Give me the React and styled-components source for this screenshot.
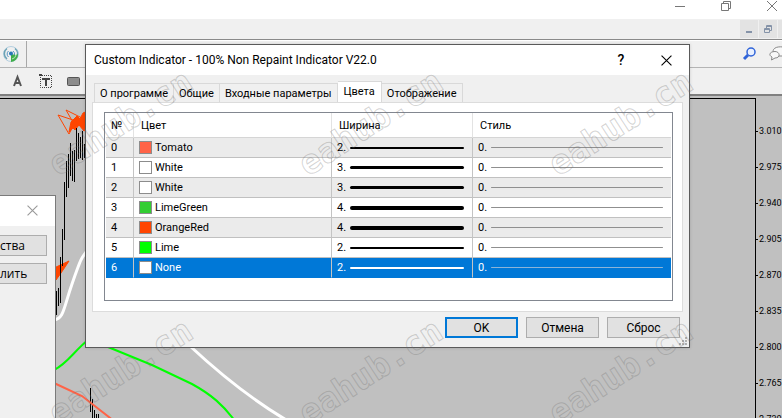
import React from "react";
import styled, { createGlobalStyle } from "styled-components";

const uiFont = `"Roboto", "Liberation Sans", sans-serif`;
const listFont = `"Open Sans", "Noto Sans", sans-serif`;

const GlobalStyle = createGlobalStyle`
    * {
        box-sizing: border-box;
    }

    body {
        margin: 0;
        overflow: hidden;
        font-family: ${uiFont};
        font-size: 11px;
        color: #000000;
    }

    button {
        font: inherit;
        color: inherit;
        border: 0;
        padding: 0;
        background: none;
    }
`;

const Desktop = styled.div`
    position: relative;
    display: flex;
    flex-direction: column;
    height: 100vh;
    overflow: hidden;
    background-color: #f0f0f0;
`;

const TitleBar = styled.header`
    display: flex;
    justify-content: flex-end;
    gap: 32px;
    height: 19px;
    padding-right: 3px;
    background-color: #ffffff;
`;

const WindowButton = styled.button`
    display: flex;
    justify-content: center;
    width: 14px;
    height: 14px;
`;

const MenuBar = styled.div`
    display: flex;
    justify-content: flex-end;
    gap: 1px;
    height: 21px;
    padding-top: 1px;
    border-bottom: 1px solid #8a8a8a;
`;

const ChildButton = styled.button`
    display: flex;
    align-items: center;
    justify-content: center;
    width: ${({$cut}) => ($cut ? "4px" : "18px")};
    height: 18px;
    background-color: #e3e3e3;
`;

const Toolbar = styled.div`
    display: flex;
    align-items: center;
    justify-content: space-between;
    height: 27px;
    border-top: 1px solid #ffffff;
`;

const ToolGroup = styled.div`
    display: flex;
    align-items: center;
    gap: ${({$gap}) => `${$gap}px`};
    height: 100%;
    padding-left: ${({$indent}) => `${$indent || 0}px`};
    padding-right: ${({$divided}) => ($divided ? "7px" : "0")};
    border-right: ${({$divided}) => ($divided ? "1px solid #a8a8a8" : "0")};
`;

const DrawBar = styled(Toolbar)`
    border-top: 1px solid #b4b4b4;
`;

const ToolButton = styled.button`
    display: flex;
    flex: none;
`;

const ChartArea = styled.main`
    display: flex;
    flex: 1;
    min-height: 0;
    padding-top: 2px;
    border-top: 2px solid #808080;
    background-color: #c0c0c0;
`;

const Plot = styled.div`
    flex: 1;
    min-width: 0;
    border-top: 1px solid #000000;
    border-right: 1px solid #000000;

    & > svg {
        display: block;
        width: 100%;
        height: 100%;
    }
`;

const Scale = styled.div`
    display: flex;
    flex-direction: column;
    width: 26px;
    padding-top: 15px;
    overflow: hidden;
    font-size: 9px;
`;

const Price = styled.span`
    display: flex;
    flex: none;
    align-items: center;
    gap: 1px;
    height: 36px;

    &::before {
        content: "";
        flex: none;
        width: 2px;
        height: 1px;
        background-color: #000000;
    }
`;

const ListWindow = styled.aside`
    position: absolute;
    top: 195px;
    bottom: -1px;
    left: -1px;
    width: 57px;
    border: 1px solid #7a7a7a;
    background-color: #f0f0f0;
    font-family: ${listFont};
    font-size: 12px;
`;

const ListTitle = styled.div`
    display: flex;
    align-items: center;
    justify-content: flex-end;
    height: 30px;
    padding-right: 17px;
    background-color: #ffffff;
`;

const ListActions = styled.div`
    display: flex;
    flex-direction: column;
    gap: 7px;
    padding: 9px 8px 0 0;
`;

const ListButton = styled.button`
    height: 21px;
    border: 1px solid #adadad;
    border-left: 0;
    background-color: #e1e1e1;
    text-align: left;
`;

const Dialog = styled.section`
    position: absolute;
    top: 44px;
    left: 85px;
    right: 92px;
    border: 1px solid #5a5a5a;
    background-color: #f0f0f0;
    box-shadow: 0 0 3px rgba(0, 0, 0, 0.15);
`;

const DialogTitle = styled.div`
    display: flex;
    align-items: center;
    height: 30px;
    padding: 0 17px 0 8px;
    background-color: #ffffff;

    & > h1 {
        flex: 1;
        margin: 0;
        font-size: 12px;
        font-weight: 400;
        white-space: nowrap;
    }
`;

const DialogButton = styled.button`
    display: flex;
    align-items: center;
    justify-content: center;
    width: 12px;
    height: 20px;
    margin-left: 33px;
    font-size: 14px;
    font-weight: 500;
`;

const DialogBody = styled.div`
    padding: 6px 6px 0;
`;

const Tabs = styled.div`
    display: flex;
    align-items: flex-end;
    padding-left: 2px;
`;

const Tab = styled.button`
    height: ${({$active}) => ($active ? "21px" : "19px")};
    padding: ${({$active}) => ($active ? "0 6px 2px" : "0 5px")};
    border: 1px solid #d9d9d9;
    border-bottom: 0;
    border-left-width: ${({$joined}) => ($joined ? "0" : "1px")};
    background-color: ${({$active}) => ($active ? "#ffffff" : "#f0f0f0")};
    white-space: nowrap;
`;

const TabPanel = styled.div`
    padding: 9px 9px 10px 11px;
    border: 1px solid #dcdcdc;
    background-color: #ffffff;
`;

const TableFrame = styled.div`
    height: 189px;
    padding: 0 1px;
    border: 1px solid #828790;
`;

const Table = styled.table`
    width: 100%;
    table-layout: fixed;
    border-collapse: separate;
    border-spacing: 0;

    th {
        height: 25px;
        padding: 0 0 0 7px;
        border-bottom: 1px solid #d5d5d5;
        border-right: 1px solid #e3e3e3;
        font-weight: 400;
        text-align: left;
    }

    th:first-child {
        padding-left: 5px;
    }

    td {
        height: 20px;
        padding: 0 0 0 5px;
        border-right: 1px solid #c4c4c4;
        border-bottom: 1px solid #c0c0c0;
    }

    th:last-child,
    td:last-child {
        border-right: 0;
    }
`;

const Column = styled.col`
    width: ${({$width}) => ($width ? `${$width}px` : "auto")};
`;

const Row = styled.tr`
    background-color: ${({$selected, $odd}) =>
        $selected ? "#0078d7" : $odd ? "#ffffff" : "#ebebeb"};
    color: ${({$selected}) => ($selected ? "#ffffff" : "#000000")};

    & > td {
        border-bottom-color: ${({$selected}) => ($selected ? "#0078d7" : "#c0c0c0")};
    }
`;

const Cell = styled.div`
    display: flex;
    align-items: center;
    height: 19px;
`;

const Swatch = styled.span`
    width: 13px;
    height: 13px;
    margin-right: 3px;
    border: 1px solid #8c8c8c;
    background-color: ${({$color}) => $color};
`;

const Size = styled.span`
    width: 13px;
`;

const Stroke = styled.span`
    flex: 1;
    height: ${({$weight}) => `${$weight}px`};
    margin-right: 8px;
    border-radius: 2px;
    background-color: ${({$color}) => $color};
`;

const DialogFooter = styled.div`
    display: flex;
    justify-content: flex-end;
    gap: 8px;
    padding: 5px 3px 9px 0;
`;

const Button = styled.button`
    width: 73px;
    height: 21px;
    border: ${({$primary}) => ($primary ? "2px solid #0078d7" : "1px solid #adadad")};
    background-color: #e1e1e1;
    font-size: 12px;
`;

const Grip = styled.svg`
    position: absolute;
    right: 1px;
    bottom: 1px;
`;

const Watermark = styled.svg`
    position: absolute;
    top: 0;
    left: 0;
    width: 100%;
    height: 100%;
    pointer-events: none;
    fill: none;
    stroke: rgba(110, 110, 110, 0.3);
    stroke-width: 1px;
    font-family: "DejaVu Sans Mono", monospace;
    font-size: 34px;
    font-weight: 700;
`;

const prices = ["3.010", "2.975", "2.940", "2.905", "2.870", "2.835", "2.800", "2.765", "2.730"];

const tabs = ["О программе", "Общие", "Входные параметры", "Цвета", "Отображение"];

const rows = [
    {name: "Tomato", color: "#ff6347", width: 2},
    {name: "White", color: "#ffffff", width: 3},
    {name: "White", color: "#ffffff", width: 3},
    {name: "LimeGreen", color: "#32cd32", width: 4},
    {name: "OrangeRed", color: "#ff4500", width: 4},
    {name: "Lime", color: "#00ff00", width: 2},
    {name: "None", color: "#ffffff", width: 2},
];

// x, high, low
const bars = [
    [56, 290, 314], [58, 287, 305], [60, 256, 302], [62, 228, 265],
    [64, 181, 239], [66, 160, 196], [68, 153, 187], [70, 142, 175],
    [72, 150, 180], [74, 149, 181], [76, 127, 160], [78, 132, 158],
    [80, 136, 157], [82, 130, 159], [84, 143, 157],
    [90, 387, 411], [92, 398, 420], [94, 409, 420], [96, 413, 420], [98, 413, 420],
];

const marks = [[58, 177], [308, 177], [558, 177], [58, 426], [308, 426], [558, 426]];

function Cross({size, color, width = 1}) {
    return (
        <svg width={size} height={size} viewBox="0 0 10 10" stroke={color} strokeWidth={width}>
            <path d="M0.5 0.5 9.5 9.5M9.5 0.5 0.5 9.5" />
        </svg>
    );
}

function Chart() {
    return (
        <svg aria-hidden="true">
            <g transform="translate(0 -98)" fill="none">
                <g stroke="#ff4500" fill="none">
                    <path d="M58 114 76 120 69 133ZM66 109 84 118 74 123Z" />
                    <path fill="#ff4500" d="M69 131 71 121 77 115 80 118 83 112 90 109V126L84 130 79 124 75 129 73 127Z" />
                    <path fill="#ff4500" d="M54 267 69 260 61 272 56 279Z" />
                </g>
                <g stroke="#000000" shapeRendering="crispEdges">
                    {bars.map(([x, high, low]) => (
                        <path key={x} d={`M${x + 0.5} ${high}V${low}`} />
                    ))}
                </g>
                <path stroke="#ffffff" strokeWidth="3" d="M54 319C64 317 63 309 72 283S81 257 90 246" />
                <path stroke="#ffffff" strokeWidth="3" d="M190 345C220 373 254 400 288 420" />
                <path stroke="#00ff00" strokeWidth="2" d="M54 369C68 362 74 350 88 339" />
                <path stroke="#00ff00" strokeWidth="2" d="M108 346 152 364 192 383C212 394 223 404 235 420" />
                <path stroke="#ff6347" strokeWidth="2" d="M54 382 82 395 114 420" />
            </g>
        </svg>
    );
}

function Terminal() {
    return (
        <>
            <TitleBar>
                <WindowButton aria-label="Minimize">
                    <svg width="14" height="14" stroke="#777777"><path d="M2 6.5H12" /></svg>
                </WindowButton>
                <WindowButton aria-label="Restore">
                    <svg width="14" height="14" stroke="#777777" fill="none">
                        <path d="M2.5 3.5H9.5V10.5H2.5ZM4.5 3.5V1.5H11.5V8.5H9.5" />
                    </svg>
                </WindowButton>
                <WindowButton aria-label="Close">
                    <svg width="14" height="14" stroke="#777777"><path d="M2 1 12 11M12 1 2 11" /></svg>
                </WindowButton>
            </TitleBar>
            <MenuBar>
                <ChildButton aria-label="Minimize chart">
                    <svg width="10" height="10" stroke="#8593a8" strokeWidth="2"><path d="M2 8H8" /></svg>
                </ChildButton>
                <ChildButton aria-label="Restore chart">
                    <svg width="10" height="10" stroke="#8593a8" fill="none">
                        <path d="M1.5 4.5H6.5V8.5H1.5ZM1 5.5H7M3.5 4V1.5H8.5V6.5H7M3 2.5H9" />
                    </svg>
                </ChildButton>
                <ChildButton aria-label="Close chart" $cut />
            </MenuBar>
            <Toolbar>
                <ToolGroup $gap={7} $indent={2} $divided>
                    <ToolButton aria-label="Signals">
                        <svg width="17" height="18" fill="none">
                            <circle cx="9" cy="9" r="7.5" stroke="#b4cfe0" />
                            <path stroke="#6ba2b5" strokeWidth="1.5" d="M5 14A6.5 6.5 0 0 1 5 3.5M13 3.5A6.5 6.5 0 0 1 14.5 12" />
                            <path stroke="#5795c4" d="M6.5 12A4 4 0 0 1 6.5 6M11 6A4 4 0 0 1 12.5 10" />
                            <path fill="#3fae49" d="M9 9 14 10 16 9A7.5 7.5 0 0 1 9 17Z" />
                            <path stroke="#bde5bd" d="M10 14A5 5 0 0 0 14 10" />
                            <circle cx="9" cy="8.5" r="2" fill="#2878b5" />
                        </svg>
                    </ToolButton>
                </ToolGroup>
                <ToolGroup $gap={12}>
                    <ToolButton aria-label="Search">
                        <svg width="15" height="16" fill="none" stroke="#2f63d8">
                            <circle cx="9" cy="6" r="4" strokeWidth="1.5" fill="#e8f0ff" />
                            <path d="M6 9 2 13" strokeWidth="3" />
                        </svg>
                    </ToolButton>
                    <ToolButton aria-label="Chat">
                        <svg width="13" height="16" fill="#f8f8f8" stroke="#888888">
                            <path d="M5 8C2 3 7 0 14 1V10H9Z" />
                            <path d="M6 5.5C11 5.5 12 12 6 12L2.5 14 3 11C-1 9 1 5.5 6 5.5Z" />
                        </svg>
                    </ToolButton>
                </ToolGroup>
            </Toolbar>
            <DrawBar>
                <ToolGroup $gap={15} $indent={11}>
                    <ToolButton aria-label="Text">
                        <svg width="13" height="14" fill="none" stroke="#555555" strokeWidth="2">
                            <path d="M3 12 6.5 3 10 12M4 9H9" />
                        </svg>
                    </ToolButton>
                    <ToolButton aria-label="Text label">
                        <svg width="13" height="14" fill="none" stroke="#444444">
                            <path strokeDasharray="1 1" d="M1 1.5H12.5V13.5H1.5V1" />
                            <path d="M0 1H3" strokeWidth="2" />
                            <path strokeWidth="2" d="M3 5H11M7 5V12" />
                        </svg>
                    </ToolButton>
                    <ToolButton aria-label="Rectangle">
                        <svg width="14" height="14">
                            <rect x="0.5" y="3.5" width="12" height="8" rx="1" fill="#8c8c8c" stroke="#555555" />
                        </svg>
                    </ToolButton>
                </ToolGroup>
            </DrawBar>
            <ChartArea>
                <Plot>
                    <Chart />
                </Plot>
                <Scale>
                    {prices.map((price) => (
                        <Price key={price}>{price}</Price>
                    ))}
                </Scale>
            </ChartArea>
        </>
    );
}

function ColorRow({index, name, color, width}) {
    const selected = index === 6;

    return (
        <Row $selected={selected} $odd={index % 2 === 1} aria-selected={selected}>
            <td>{index}</td>
            <td>
                <Cell>
                    <Swatch $color={color} />
                    {name}
                </Cell>
            </td>
            <td>
                <Cell>
                    <Size>{width}.</Size>
                    <Stroke $weight={width} $color={selected ? "#ffffff" : "#000000"} />
                </Cell>
            </td>
            <td>
                <Cell>
                    <Size>0.</Size>
                    <Stroke $weight={1} $color={selected ? "#8cb4d8" : "#8f8f8f"} />
                </Cell>
            </td>
        </Row>
    );
}

export default function App() {
    return (
        <Desktop>
            <GlobalStyle />
            <Terminal />
            <ListWindow>
                <ListTitle>
                    <button aria-label="Close list">
                        <Cross size={11} color="#999999" />
                    </button>
                </ListTitle>
                <ListActions>
                    <ListButton>ства</ListButton>
                    <ListButton>лить</ListButton>
                </ListActions>
            </ListWindow>
            <Dialog role="dialog" aria-labelledby="dialog-title">
                <DialogTitle>
                    <h1 id="dialog-title">Custom Indicator - 100% Non Repaint Indicator V22.0</h1>
                    <DialogButton>?</DialogButton>
                    <DialogButton aria-label="Close dialog">
                        <Cross size={11} color="#000000" />
                    </DialogButton>
                </DialogTitle>
                <DialogBody>
                    <Tabs role="tablist">
                        {tabs.map((tab, i) => (
                            <Tab key={tab} role="tab" aria-selected={i === 3} $active={i === 3} $joined={i > 0}>
                                {tab}
                            </Tab>
                        ))}
                    </Tabs>
                    <TabPanel role="tabpanel">
                        <TableFrame>
                            <Table>
                                <colgroup>
                                    <Column $width={28} />
                                    <Column $width={198} />
                                    <Column $width={141} />
                                    <Column />
                                </colgroup>
                                <thead>
                                    <tr>
                                        <th>№</th>
                                        <th>Цвет</th>
                                        <th>Ширина</th>
                                        <th>Стиль</th>
                                    </tr>
                                </thead>
                                <tbody>
                                    {rows.map((row, i) => (
                                        <ColorRow key={i} index={i} {...row} />
                                    ))}
                                </tbody>
                            </Table>
                        </TableFrame>
                    </TabPanel>
                    <DialogFooter>
                        <Button $primary>OK</Button>
                        <Button>Отмена</Button>
                        <Button>Сброс</Button>
                    </DialogFooter>
                </DialogBody>
                <Grip width="9" height="9" fill="#b0b0b0" aria-hidden="true">
                    <path d="M6 0h2v2h-2zM3 3h2v2h-2zM6 3h2v2h-2zM0 6h2v2h-2zM3 6h2v2h-2zM6 6h2v2h-2z" />
                </Grip>
            </Dialog>
            <Watermark>
                {marks.map(([x, y]) => (
                    <text key={`${x}-${y}`} transform={`translate(${x} ${y}) rotate(-33)`}>eahub.cn</text>
                ))}
            </Watermark>
        </Desktop>
    );
}
